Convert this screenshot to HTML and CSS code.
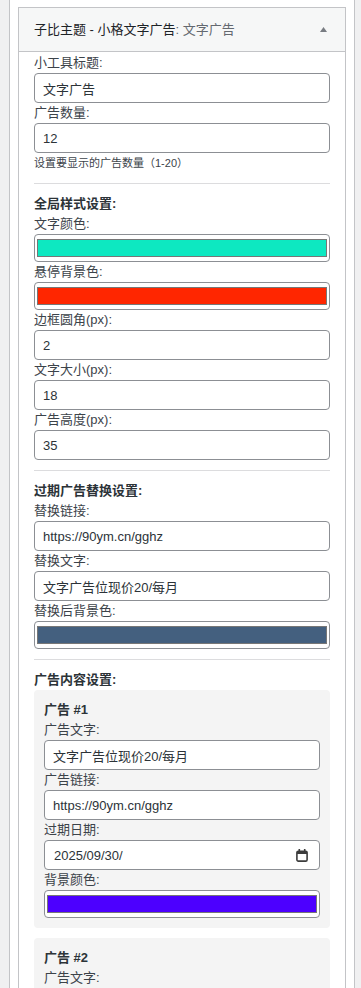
FILE: index.html
```html
<!DOCTYPE html>
<html lang="zh-CN">
<head>
    <meta charset="UTF-8">
    <meta name="viewport" content="width=device-width, initial-scale=1.0">
    <title>小工具 - 小格文字广告</title>
    <link rel="stylesheet" href="styles.css">
</head>
<body>
    <div class="sidebar">
        <div class="widget">
            <div class="widget-top">
                <h3 class="widget-title">子比主题 - 小格文字广告<span class="in-title">: 文字广告</span></h3>
                <span class="toggle">
                    <svg width="7" height="5" viewBox="0 0 7 5"><polygon points="0,5 3.5,0 7,5" fill="#787c82"/></svg>
                </span>
            </div>

            <div class="widget-inside">
                <label class="field-label">小工具标题:</label>
                <input class="text-input" type="text" value="文字广告">
                <label class="field-label">广告数量:</label>
                <input class="text-input" type="text" value="12">
                <p class="description">设置要显示的广告数量（1-20）</p>

                <hr class="divider">

                <h4 class="section-title">全局样式设置:</h4>
                <label class="field-label">文字颜色:</label>
                <input class="color-input" type="color" value="#0de8c1">
                <label class="field-label">悬停背景色:</label>
                <input class="color-input" type="color" value="#ff2600">
                <label class="field-label">边框圆角(px):</label>
                <input class="text-input" type="text" value="2">
                <label class="field-label">文字大小(px):</label>
                <input class="text-input" type="text" value="18">
                <label class="field-label">广告高度(px):</label>
                <input class="text-input" type="text" value="35">

                <hr class="divider">

                <h4 class="section-title">过期广告替换设置:</h4>
                <label class="field-label">替换链接:</label>
                <input class="text-input" type="text" value="https://90ym.cn/gghz">
                <label class="field-label">替换文字:</label>
                <input class="text-input" type="text" value="文字广告位现价20/每月">
                <label class="field-label">替换后背景色:</label>
                <input class="color-input" type="color" value="#44607f">

                <hr class="divider">

                <h4 class="section-title">广告内容设置:</h4>

                <div class="ad-item">
                    <h5 class="ad-title">广告 #1</h5>
                    <label class="field-label">广告文字:</label>
                    <input class="text-input" type="text" value="文字广告位现价20/每月">
                    <label class="field-label">广告链接:</label>
                    <input class="text-input" type="text" value="https://90ym.cn/gghz">
                    <label class="field-label">过期日期:</label>
                    <div class="date-input">
                        <span>2025/09/30/</span>
                        <svg class="calendar" width="12" height="13" viewBox="0 0 12 13">
                            <rect x="2.5" y="0" width="1.6" height="3" fill="#3c3c3c"/>
                            <rect x="7.9" y="0" width="1.6" height="3" fill="#3c3c3c"/>
                            <rect x="0.9" y="2.2" width="10.2" height="9.9" rx="1.4" fill="none" stroke="#3c3c3c" stroke-width="1.6"/>
                            <rect x="1" y="2.4" width="10" height="2.6" fill="#3c3c3c"/>
                        </svg>
                    </div>
                    <label class="field-label">背景颜色:</label>
                    <input class="color-input" type="color" value="#4c00ff">
                </div>

                <div class="ad-item">
                    <h5 class="ad-title">广告 #2</h5>
                    <label class="field-label">广告文字:</label>
                    <input class="text-input" type="text" value="文字广告位现价20/每月">
                </div>
            </div>
        </div>
    </div>
</body>
</html>
```

FILE: styles.css
```css
body {
    margin: 0;
    padding: 0 6px 0 9px;
    background-color: #f0f0f1;
    font-family: 'Liberation Sans', 'Noto Sans CJK SC', sans-serif;
    font-size: 13px;
    color: #3c434a;
}
.sidebar {
    background-color: #fff;
    border: 1px solid #c3c4c7;
    border-top: none;
    padding: 7px 8px 40px;
    min-height: 1100px;
}
.widget {
    border: 1px solid #c3c4c7;
    background-color: #fff;
}
.widget-top {
    display: flex;
    align-items: center;
    justify-content: space-between;
    height: 43px;
    padding: 0 12px 0 15px;
    background-color: #f6f7f7;
    border-bottom: 1px solid #c3c4c7;
}
.widget-title {
    margin: 0;
    font-size: 13px;
    font-weight: normal;
    line-height: 20px;
    color: #1d2327;
}
.in-title {
    color: #646970;
}
.toggle {
    display: flex;
    justify-content: center;
    width: 20px;
}
.widget-inside {
    padding: 1px 15px 20px;
}
.field-label {
    display: block;
    line-height: 20px;
    color: #3c434a;
}
.text-input {
    display: block;
    box-sizing: border-box;
    width: 100%;
    height: 30px;
    margin: 0;
    padding: 0 8px;
    border: 1px solid #8c8f94;
    border-radius: 4px;
    background-color: #fff;
    font: inherit;
    color: #2c3338;
}
.color-input {
    display: block;
    box-sizing: border-box;
    width: 100%;
    height: 28px;
    margin: 0;
    padding: 4px 2px;
    border: 1px solid #8c8f94;
    border-radius: 4px;
    background-color: #fff;
    -webkit-appearance: none;
    appearance: none;
    cursor: pointer;
}
.color-input::-webkit-color-swatch-wrapper {
    padding: 0;
}
.color-input::-webkit-color-swatch {
    border: 1px solid #777;
    border-radius: 0;
}
.date-input {
    display: flex;
    align-items: center;
    justify-content: space-between;
    box-sizing: border-box;
    height: 30px;
    padding: 0 11px 0 9px;
    border: 1px solid #8c8f94;
    border-radius: 4px;
    background-color: #fff;
    color: #2c3338;
}
.calendar {
    display: block;
}
.description {
    margin: 0;
    font-size: 11px;
    line-height: 20px;
    color: #3c434a;
}
.divider {
    margin: 10px 0;
    border: none;
    border-top: 1px solid #dcdcde;
}
.section-title {
    margin: 0;
    font-size: 13px;
    line-height: 20px;
    color: #2c3338;
}
.ad-item {
    margin-bottom: 10px;
    padding: 10px;
    border-radius: 4px;
    background-color: #f4f4f4;
}
.ad-title {
    margin: 0;
    font-size: 13px;
    line-height: 20px;
    color: #2c3338;
}
```
